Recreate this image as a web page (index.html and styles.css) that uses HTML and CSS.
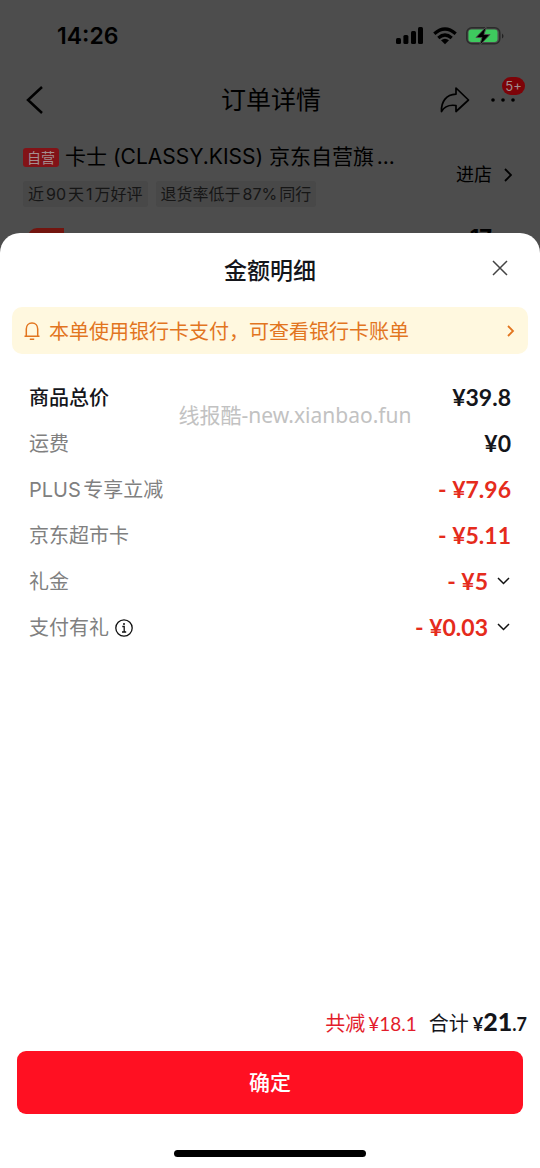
FILE: index.html
```html
<!DOCTYPE html>
<html lang="zh-CN">
<head>
<meta charset="utf-8">
<meta name="viewport" content="width=device-width, initial-scale=1">
<title>订单详情</title>
<link rel="stylesheet" href="styles.css">
</head>
<body>
<div class="behind">
  <div class="status">
    <time class="clock">14:26</time>
    <div class="status-icons">
      <svg width="28" height="18" viewBox="0 0 28 18" fill="#000"><rect x="0" y="11" width="5" height="6" rx="1.5"/><rect x="7.400" y="8" width="5" height="9" rx="1.500"/><rect x="15" y="4" width="5" height="13" rx="1.500"/><rect x="22" y="0" width="5" height="17" rx="1.500"/></svg>
      <svg width="24" height="18" viewBox="0 0 24 18" fill="none" stroke="#000" stroke-width="3.200"><path d="M1.300 6.800Q12-2.800 22.700 6.800"/><path d="M5.300 11Q12 5 18.700 11"/><path d="M12 17.300L8 13.300Q12 10.300 16 13.300Z" fill="#000" stroke="none"/></svg>
      <svg width="38" height="20" viewBox="0 0 38 20"><rect x="0.800" y="1.800" width="33" height="16" rx="5" fill="none" stroke="#2b2b2b" stroke-width="1.500"/><rect x="2.500" y="3.500" width="29" height="12.600" rx="3" fill="#3ec95e"/><path d="M36 7.500v5q1.500-1 1.500-2.500T36 7.500Z" fill="#222"/><path d="M20.500 0.500L10 11.500h6L13.500 19.500L24 8.500h-6Z" fill="#000" stroke="#4d4d4d" stroke-width="1"/></svg>
    </div>
  </div>
  <header class="nav">
    <button class="icon-btn" aria-label="返回"><svg width="18" height="28" viewBox="0 0 18 28" fill="none" stroke="#000" stroke-width="2.500"><path d="M16 1L2 14L16 27"/></svg></button>
    <h1 class="nav-title">订单详情</h1>
    <div class="nav-actions">
      <button class="icon-btn" aria-label="分享"><svg width="30" height="28" viewBox="0 0 30 28" fill="none" stroke="#000" stroke-width="1.700" stroke-linejoin="round"><path d="M16 2L28.500 14L16 25.500V19.500C9 18.500 4 21 1.500 25.500C1 16 6 8.500 16 8.200Z"/></svg></button>
      <button class="icon-btn more" aria-label="更多"><svg width="26" height="6" viewBox="0 0 26 6"><circle cx="3" cy="3" r="1.800"/><circle cx="13" cy="3" r="1.800"/><circle cx="23" cy="3" r="1.800"/></svg><span class="badge">5+</span></button>
    </div>
  </header>
  <section class="shop">
    <div class="shop-info">
      <h2 class="shop-name"><span class="self-tag">自营</span><span class="shop-text">卡士 (CLASSY.KISS) 京东自营旗...</span></h2>
      <div class="tags"><span class="tag">近90天1万好评</span><span class="tag">退货率低于87%同行</span></div>
    </div>
    <a class="enter" href="#">进店<svg width="8" height="14" viewBox="0 0 8 14" fill="none" stroke="#000" stroke-width="1.800"><path d="M1 1l6 6l-6 6"/></svg></a>
  </section>
  <div class="product"><span class="promo"></span><span class="product-price">17</span></div>
</div>
<main class="sheet" role="dialog" aria-labelledby="sheet-title">
  <header class="sheet-head">
    <h2 class="sheet-title" id="sheet-title">金额明细</h2>
    <button class="icon-btn close" aria-label="关闭"><svg width="16" height="16" viewBox="0 0 16 16" fill="none" stroke="#444" stroke-width="1.500"><path d="M1 1l14 14M15 1L1 15"/></svg></button>
  </header>
  <a class="notice" href="#">
    <svg width="16" height="20" viewBox="0 0 16 20" fill="none" stroke="#e2751f" stroke-width="1.500"><path d="M0.500 15.200H15.500M2.300 15V8C2.300 4.500 4.500 2 8 2s5.700 2.500 5.700 6v7M5.800 18.200h4.400"/></svg>
    <span class="notice-text">本单使用银行卡支付，可查看银行卡账单</span>
    <svg width="8" height="12" viewBox="0 0 8 12" fill="none" stroke="#e2751f" stroke-width="1.800"><path d="M1 1l5 5l-5 5"/></svg>
  </a>
  <dl class="lines">
    <div class="line"><dt class="strong">商品总价</dt><dd>¥39.8</dd></div>
    <div class="line"><dt>运费</dt><dd>¥0</dd></div>
    <div class="line"><dt>PLUS专享立减</dt><dd class="off">- ¥7.96</dd></div>
    <div class="line"><dt>京东超市卡</dt><dd class="off">- ¥5.11</dd></div>
    <div class="line"><dt>礼金</dt><dd class="off">- ¥5<button class="icon-btn" aria-label="展开礼金"><svg width="14" height="8" viewBox="0 0 14 8" fill="none" stroke="#111" stroke-width="1.500"><path d="M1 1l5.500 5.500L12 1"/></svg></button></dd></div>
    <div class="line"><dt>支付有礼<button class="icon-btn" aria-label="说明"><svg width="18" height="18" viewBox="0 0 18 18" fill="none" stroke="#111" stroke-width="1.300"><circle cx="9" cy="9" r="8.200"/><path d="M7.300 7.500H9.200V13M7 13h4.200"/><circle cx="9" cy="4.900" r="1" fill="#111" stroke="none"/></svg></button></dt><dd class="off">- ¥0.03<button class="icon-btn" aria-label="展开支付有礼"><svg width="14" height="8" viewBox="0 0 14 8" fill="none" stroke="#111" stroke-width="1.500"><path d="M1 1l5.500 5.500L12 1"/></svg></button></dd></div>
  </dl>
  <span class="watermark">线报酷-new.xianbao.fun</span>
  <footer class="foot">
    <p class="totals"><span class="saved">共减<span class="saved-num">¥18.1</span></span><span class="sum">合计<span class="sum-num">¥<b>21</b>.7</span></span></p>
    <button class="confirm">确定</button>
  </footer>
  <div class="home-bar"></div>
</main>
</body>
</html>
```
FILE: styles.css
```css
* { box-sizing: border-box; }
body {
  margin: 0;
  min-height: 100vh;
  display: flex;
  flex-direction: column;
  background: #4d4d4d;
  color: #14151a;
  font: 20px/28px Inter, "Noto Sans CJK SC", sans-serif;
  text-autospace: normal;
}
h1, h2, p, dl, dd { margin: 0; }
svg { display: block; flex: none; }
a { color: inherit; text-decoration: none; }
button { font: inherit; border: 0; padding: 0; cursor: pointer; }
.icon-btn { background: none; display: flex; }

.behind { color: #000; }
.status { display: flex; justify-content: space-between; align-items: center; height: 72px; padding: 0 36px 0 57px; }
.clock { font-size: 23px; font-weight: 600; }
.status-icons { display: flex; align-items: center; gap: 9px; }
.nav { display: grid; grid-template-columns: 1fr auto 1fr; align-items: center; height: 56px; padding: 0 24px 0 26px; }
.nav-title { font-size: 25px; line-height: 36px; font-weight: 400; }
.nav-actions { display: flex; justify-content: flex-end; align-items: center; gap: 20px; }
.more { position: relative; }
.badge { position: absolute; left: 12px; bottom: 8px; width: 23px; height: 18px; border-radius: 9px; background: #7d0308; color: #a09090; font-size: 13px; line-height: 18px; text-align: center; }
.shop { display: flex; align-items: center; justify-content: space-between; height: 92px; padding: 2px 28px 0 23px; }
.shop-info { display: grid; gap: 10px; }
.shop-name { display: flex; align-items: center; gap: 6px; font-weight: 400; font-size: 21px; }
.self-tag { padding: 0 4px; border-radius: 3px; background: #821317; color: #a58f8f; font-size: 14px; line-height: 19px; }
.tags { display: flex; gap: 8px; font-size: 16px; line-height: 26px; color: #161616; }
.tag { padding: 0 5px; background: #484848; border-radius: 3px; }
.enter { display: flex; align-items: center; gap: 12px; font-size: 18px; }
.product { display: flex; justify-content: space-between; height: 13px; padding: 8px 48px 0 28px; overflow: hidden; }
.promo { width: 36px; height: 18px; border-radius: 9px 0 0 0; background: #73150f; }
.product-price { font-size: 22px; line-height: 18px; font-weight: 700; }

.sheet { position: relative; flex: 1; display: flex; flex-direction: column; background: #fff; border-radius: 20px 20px 0 0; }
.sheet-head { display: grid; grid-template-columns: 1fr auto 1fr; align-items: center; height: 74px; padding: 0 32px; }
.sheet-title { grid-column: 2; padding-top: 2px; font-size: 23px; line-height: 32px; font-weight: 500; }
.close { justify-self: end; padding-bottom: 4px; }
.notice { display: flex; align-items: center; gap: 9px; margin: 0 12px; padding: 0 13px 0 12px; height: 47px; border-radius: 10px; background: #fff8df; color: #e2751f; }
.notice-text { flex: 1; padding-top: 2px; }
.lines { padding: 20px 29px 0; }
.line { display: flex; justify-content: space-between; align-items: center; height: 46px; }
dt { display: flex; align-items: center; gap: 6px; padding-top: 2px; color: #808080; }
.strong { color: #14151a; font-weight: 500; }
dd { display: flex; align-items: center; gap: 9px; font-family: Lato, sans-serif; font-size: 23px; font-weight: 700; }
.off { color: #e52b1c; }
.watermark { position: absolute; top: 168px; left: 0; right: 0; padding-left: 50px; text-align: center; color: #c2c2c2; font-family: "Noto Sans", "Noto Sans CJK SC", sans-serif; font-size: 21px; pointer-events: none; }
.foot { margin-top: auto; padding: 0 17px; }
.totals { display: flex; justify-content: flex-end; align-items: baseline; gap: 12px; margin-right: -4px; padding-bottom: 13px; }
.saved { color: #e31c2b; display: flex; align-items: baseline; gap: 3px; }
.saved-num { font-family: Lato, sans-serif; font-size: 19px; }
.sum { display: flex; align-items: baseline; gap: 4px; }
.sum-num { font-family: Lato, sans-serif; font-size: 18px; font-weight: 700; }
.sum-num b { font-size: 25px; }
.confirm { width: 100%; height: 63px; border-radius: 9px; background: #ff1022; color: #fff; font-size: 21px; font-weight: 500; }
.home-bar { width: 192px; height: 7px; margin: 36px auto 11px; border-radius: 4px; background: #000; }
```
